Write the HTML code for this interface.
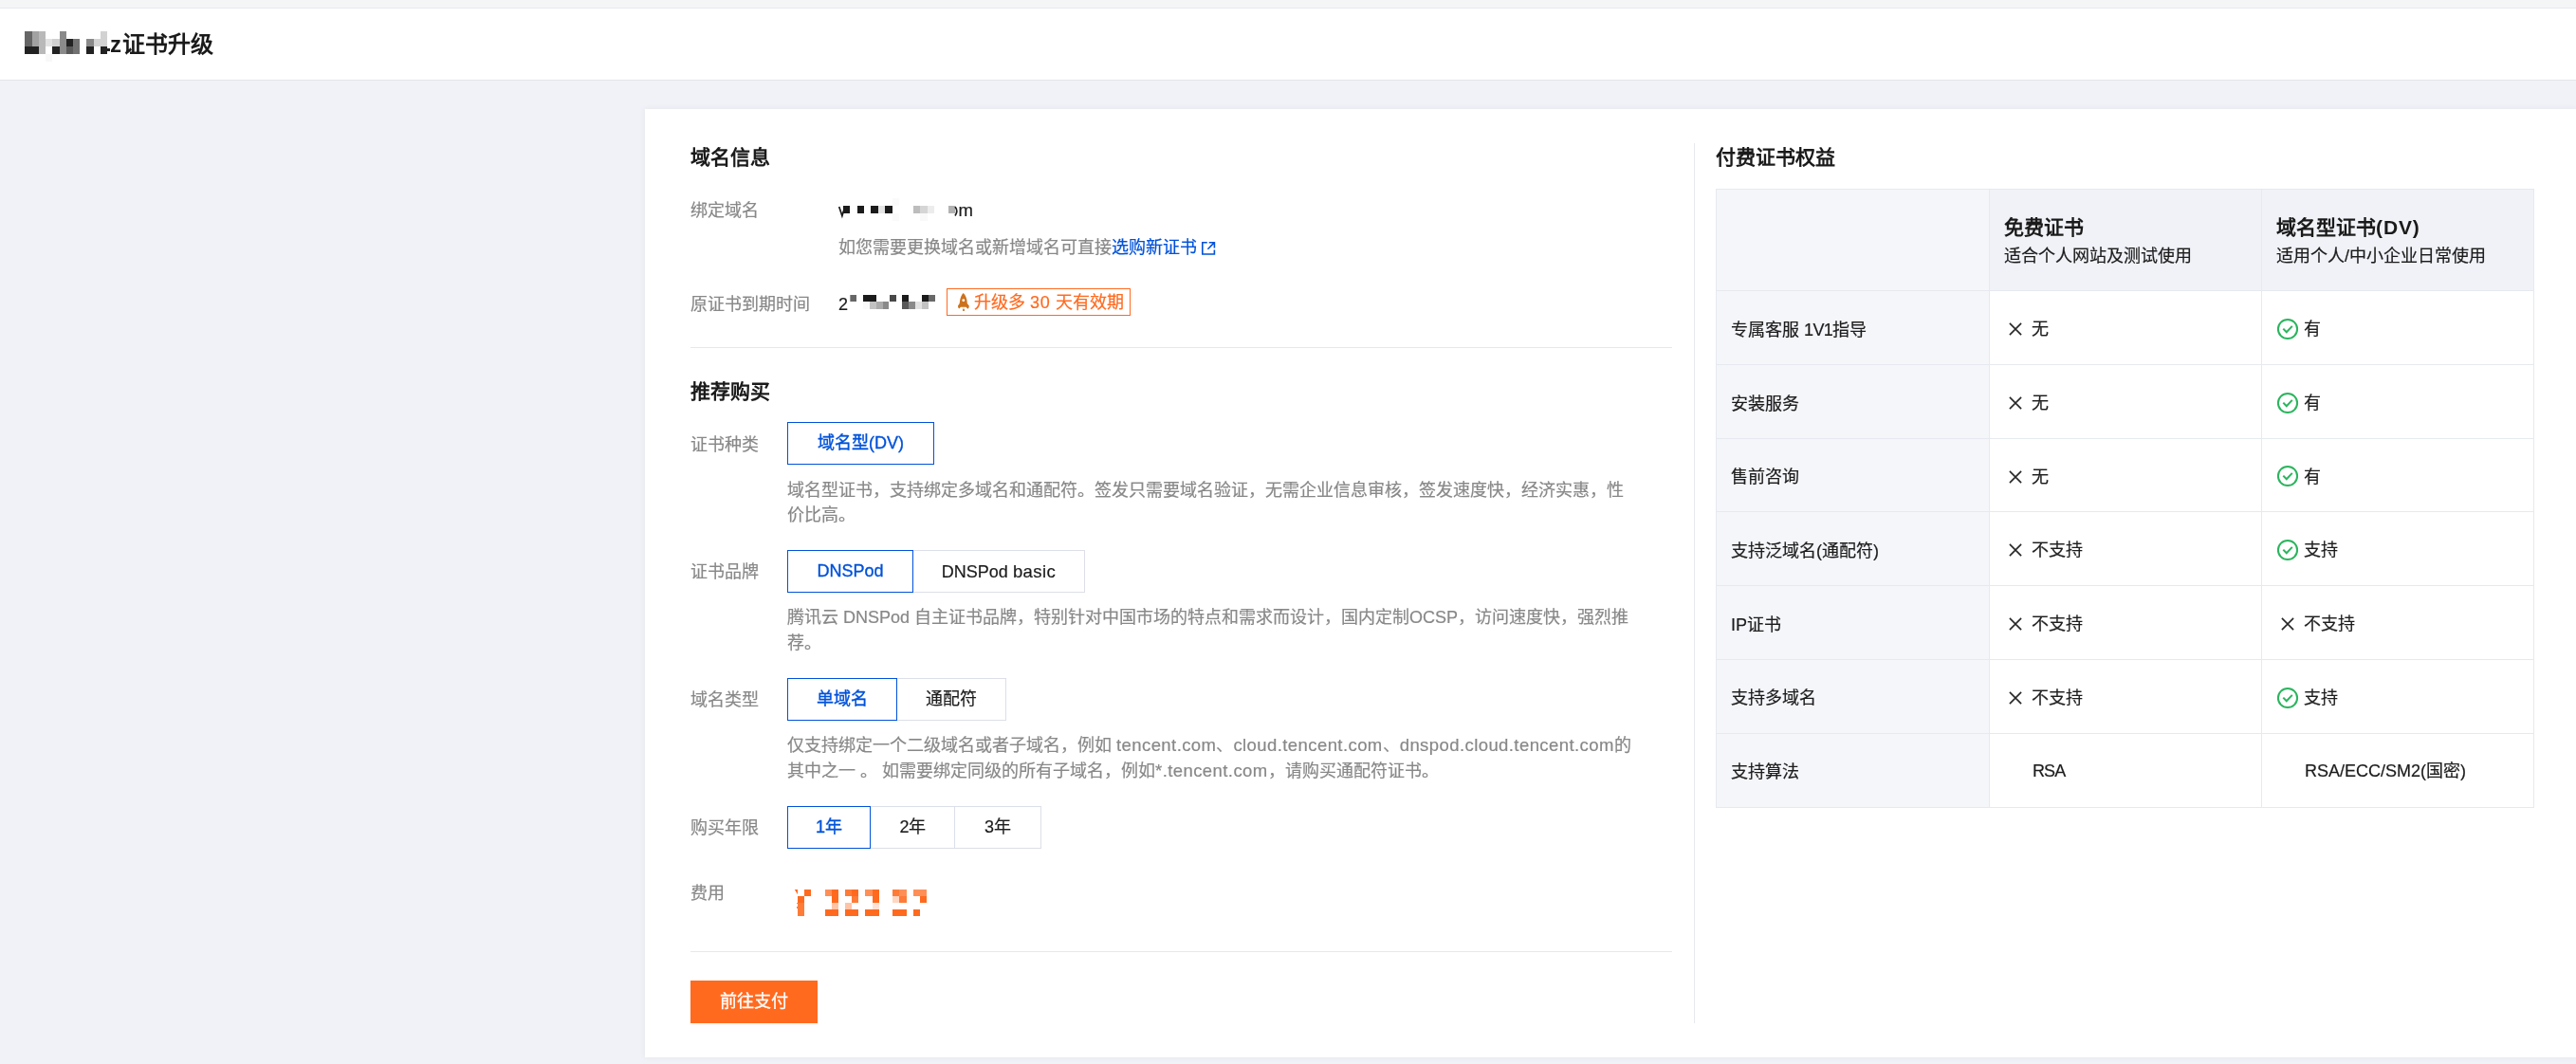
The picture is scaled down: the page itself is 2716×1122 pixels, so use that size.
<!DOCTYPE html>
<html lang="zh-CN">
<head>
<meta charset="utf-8">
<title>证书升级</title>
<style>
html,body{margin:0;padding:0}
body{width:2716px;height:1122px;position:relative;overflow:hidden;background:#f1f2f7;font-family:"Liberation Sans",sans-serif;}
#w>div,.ov,.ic{position:absolute}
.ov{left:0;top:0}
.t{white-space:nowrap;line-height:1;-webkit-text-stroke:.2px}
.b{-webkit-text-stroke:0}
.l{font-size:18.5px;letter-spacing:.42px}
#w{position:absolute;left:0;top:0;width:2716px;height:1122px;will-change:transform}
.seg{box-sizing:content-box;border:1px solid #dcdfe8;background:#fff;color:#1c1c1c;font-size:18px;line-height:43px;text-align:center;white-space:nowrap;-webkit-text-stroke:.2px}
.seg.on{border:1px solid #0052d9;color:#0052d9;-webkit-text-stroke:.35px}
.pay{background:#ff6a1f;color:#fff;font-size:18px;line-height:44px;text-align:center;white-space:nowrap;-webkit-text-stroke:.3px;box-shadow:0 2px 2px rgba(255,106,31,.07)}
</style>
</head>
<body>
<div id="w">
<div style="left:0px;top:0px;width:2716px;height:8px;background:#f4f5f7"></div>
<div style="left:0px;top:8px;width:2716px;height:1px;background:#e5e8ed"></div>
<div style="left:0px;top:9px;width:2716px;height:75px;background:#fff"></div>
<div style="left:0px;top:84px;width:2716px;height:1px;background:#e2e5ea"></div>
<div style="left:680px;top:115px;width:2036px;height:1000px;background:#fff;box-shadow:0 0 6px rgba(40,50,90,.07)"></div>
<div class="t b" style="left:116px;top:34.9px;font-size:24px;color:#1a1a1a;font-weight:700;"><span style="letter-spacing:1.4px">z</span>证书升级</div>
<div class="t b" style="left:728px;top:155.4px;font-size:21px;color:#1a1a1a;font-weight:700;">域名信息</div>
<div class="t" style="left:728px;top:212.9px;font-size:18px;color:#888888;font-weight:400;">绑定域名</div>
<div class="t" style="left:1010.5px;top:212.9px;font-size:18px;color:#1c1c1c;font-weight:400;"><span class="l">m</span></div>
<div class="t" style="left:884px;top:252.1px;font-size:18px;color:#888888;font-weight:400;">如您需要更换域名或新增域名可直接<span style="color:#0052d9">选购新证书</span></div>
<div class="t" style="left:728px;top:312.1px;font-size:18px;color:#888888;font-weight:400;">原证书到期时间</div>
<div class="t" style="left:884px;top:312.1px;font-size:18px;color:#1c1c1c;font-weight:400;">2</div>
<div style="left:998px;top:304px;width:192px;height:27px;border:1px solid #ff6a1f"></div>
<div class="t" style="left:1027px;top:310.0px;font-size:18px;color:#ff6a1f;font-weight:400;">升级多 <span style="letter-spacing:.8px">30</span> 天有效期</div>
<div style="left:728px;top:366px;width:1035px;height:1px;background:#e6e8ee"></div>
<div style="left:728px;top:1003px;width:1035px;height:1px;background:#e6e8ee"></div>
<div style="left:1786px;top:151px;width:1px;height:928px;background:#e6e8ee"></div>
<div class="t b" style="left:728px;top:401.9px;font-size:21px;color:#1a1a1a;font-weight:700;">推荐购买</div>
<div class="t" style="left:728px;top:459.6px;font-size:18px;color:#888888;font-weight:400;">证书种类</div>
<div class="seg on" style="left:830px;top:445px;width:153px;height:43px;">域名型(DV)</div>
<div class="t" style="left:830px;top:508.2px;font-size:18px;color:#888888;font-weight:400;">域名型证书，支持绑定多域名和通配符。签发只需要域名验证，无需企业信息审核，签发速度快，经济实惠，性</div>
<div class="t" style="left:830px;top:534.0px;font-size:18px;color:#888888;font-weight:400;">价比高。</div>
<div class="t" style="left:728px;top:593.6px;font-size:18px;color:#888888;font-weight:400;">证书品牌</div>
<div class="seg" style="left:962px;top:580px;width:180px;height:43px;">DNSPod <span class="l">basic</span></div>
<div class="seg on" style="left:830px;top:580px;width:131px;height:43px;">DNSPod</div>
<div class="t" style="left:830px;top:641.9px;font-size:18px;color:#888888;font-weight:400;">腾讯云 DNSPod 自主证书品牌，特别针对中国市场的特点和需求而设计，国内定制OCSP，访问速度快，强烈推</div>
<div class="t" style="left:830px;top:669.1px;font-size:18px;color:#888888;font-weight:400;">荐。</div>
<div class="t" style="left:728px;top:729.2px;font-size:18px;color:#888888;font-weight:400;">域名类型</div>
<div class="seg" style="left:945px;top:715px;width:114px;height:43px;">通配符</div>
<div class="seg on" style="left:830px;top:715px;width:114px;height:43px;">单域名</div>
<div class="t" style="left:830px;top:777.0px;font-size:18px;color:#888888;font-weight:400;">仅支持绑定一个二级域名或者子域名，例如 <span class="l">tencent.com</span>、<span class="l">cloud.tencent.com</span>、<span class="l">dnspod.cloud.tencent.com</span>的</div>
<div class="t" style="left:830px;top:803.9px;font-size:18px;color:#888888;font-weight:400;">其中之一 。 如需要绑定同级的所有子域名，例如<span class="l">*.tencent.com</span>，请购买通配符证书。</div>
<div class="t" style="left:728px;top:864.1px;font-size:18px;color:#888888;font-weight:400;">购买年限</div>
<div class="seg" style="left:917px;top:850px;width:89px;height:43px;">2年</div>
<div class="seg" style="left:1006px;top:850px;width:90px;height:43px;">3年</div>
<div class="seg on" style="left:830px;top:850px;width:86px;height:43px;">1年</div>
<div class="t" style="left:728px;top:933.3px;font-size:18px;color:#888888;font-weight:400;">费用</div>
<div class="pay" style="left:728px;top:1034px;width:134px;height:45px;">前往支付</div>
<div class="t b" style="left:1809px;top:155.4px;font-size:21px;color:#1a1a1a;font-weight:700;">付费证书权益</div>
<div style="left:1809px;top:199px;width:862px;height:652px;background:#fff"></div>
<div style="left:1809px;top:199px;width:288px;height:652px;background:#f5f6fa"></div>
<div style="left:2097px;top:199px;width:574px;height:107px;background:#f1f2f7"></div>
<div style="left:1809px;top:199px;width:863px;height:1px;background:#e6e9ef"></div>
<div style="left:1809px;top:306px;width:863px;height:1px;background:#e6e9ef"></div>
<div style="left:1809px;top:384px;width:863px;height:1px;background:#e6e9ef"></div>
<div style="left:1809px;top:462px;width:863px;height:1px;background:#e6e9ef"></div>
<div style="left:1809px;top:539px;width:863px;height:1px;background:#e6e9ef"></div>
<div style="left:1809px;top:617px;width:863px;height:1px;background:#e6e9ef"></div>
<div style="left:1809px;top:695px;width:863px;height:1px;background:#e6e9ef"></div>
<div style="left:1809px;top:773px;width:863px;height:1px;background:#e6e9ef"></div>
<div style="left:1809px;top:851px;width:863px;height:1px;background:#e6e9ef"></div>
<div style="left:1809px;top:199px;width:1px;height:653px;background:#e6e9ef"></div>
<div style="left:2097px;top:199px;width:1px;height:653px;background:#e6e9ef"></div>
<div style="left:2384px;top:199px;width:1px;height:653px;background:#e6e9ef"></div>
<div style="left:2671px;top:199px;width:1px;height:653px;background:#e6e9ef"></div>
<div class="t b" style="left:2113px;top:228.5px;font-size:21px;color:#1a1a1a;font-weight:700;">免费证书</div>
<div class="t" style="left:2113px;top:260.6px;font-size:18px;color:#1c1c1c;font-weight:400;">适合个人网站及测试使用</div>
<div class="t b" style="left:2400px;top:228.5px;font-size:21px;color:#1a1a1a;font-weight:700;">域名型证书<span style="letter-spacing:.9px">(DV)</span></div>
<div class="t" style="left:2400px;top:260.6px;font-size:18px;color:#1c1c1c;font-weight:400;">适用个人/中小企业日常使用</div>
<div class="t" style="left:1825px;top:338.6px;font-size:18px;color:#1c1c1c;font-weight:400;">专属客服 <span style="letter-spacing:-.6px">1V1</span>指导</div>
<svg class="ic" style="left:2117.2px;top:339.3px" width="16" height="16" viewBox="0 0 16 16"><path d="M1.9 1.9 L14.1 14.1 M14.1 1.9 L1.9 14.1" stroke="#262626" stroke-width="1.6" fill="none"/></svg>
<div class="t" style="left:2142px;top:338.1px;font-size:18px;color:#1c1c1c;font-weight:400;">无</div>
<svg class="ic" style="left:2400px;top:334.8px" width="24" height="24" viewBox="0 0 24 24"><circle cx="12" cy="12" r="10.1" stroke="#2bb55e" stroke-width="2" fill="none"/><path d="M7.3 11.6 L10.8 15.3 L16.8 8.9" stroke="#2bb55e" stroke-width="2" fill="none"/></svg>
<div class="t" style="left:2429px;top:338.1px;font-size:18px;color:#1c1c1c;font-weight:400;">有</div>
<div class="t" style="left:1825px;top:416.6px;font-size:18px;color:#1c1c1c;font-weight:400;">安装服务</div>
<svg class="ic" style="left:2117.2px;top:417.3px" width="16" height="16" viewBox="0 0 16 16"><path d="M1.9 1.9 L14.1 14.1 M14.1 1.9 L1.9 14.1" stroke="#262626" stroke-width="1.6" fill="none"/></svg>
<div class="t" style="left:2142px;top:416.1px;font-size:18px;color:#1c1c1c;font-weight:400;">无</div>
<svg class="ic" style="left:2400px;top:412.8px" width="24" height="24" viewBox="0 0 24 24"><circle cx="12" cy="12" r="10.1" stroke="#2bb55e" stroke-width="2" fill="none"/><path d="M7.3 11.6 L10.8 15.3 L16.8 8.9" stroke="#2bb55e" stroke-width="2" fill="none"/></svg>
<div class="t" style="left:2429px;top:416.1px;font-size:18px;color:#1c1c1c;font-weight:400;">有</div>
<div class="t" style="left:1825px;top:494.2px;font-size:18px;color:#1c1c1c;font-weight:400;">售前咨询</div>
<svg class="ic" style="left:2117.2px;top:494.90000000000003px" width="16" height="16" viewBox="0 0 16 16"><path d="M1.9 1.9 L14.1 14.1 M14.1 1.9 L1.9 14.1" stroke="#262626" stroke-width="1.6" fill="none"/></svg>
<div class="t" style="left:2142px;top:493.7px;font-size:18px;color:#1c1c1c;font-weight:400;">无</div>
<svg class="ic" style="left:2400px;top:490.40000000000003px" width="24" height="24" viewBox="0 0 24 24"><circle cx="12" cy="12" r="10.1" stroke="#2bb55e" stroke-width="2" fill="none"/><path d="M7.3 11.6 L10.8 15.3 L16.8 8.9" stroke="#2bb55e" stroke-width="2" fill="none"/></svg>
<div class="t" style="left:2429px;top:493.7px;font-size:18px;color:#1c1c1c;font-weight:400;">有</div>
<div class="t" style="left:1825px;top:571.7px;font-size:18px;color:#1c1c1c;font-weight:400;">支持泛域名(通配符)</div>
<svg class="ic" style="left:2117.2px;top:572.4px" width="16" height="16" viewBox="0 0 16 16"><path d="M1.9 1.9 L14.1 14.1 M14.1 1.9 L1.9 14.1" stroke="#262626" stroke-width="1.6" fill="none"/></svg>
<div class="t" style="left:2142px;top:571.2px;font-size:18px;color:#1c1c1c;font-weight:400;">不支持</div>
<svg class="ic" style="left:2400px;top:567.9px" width="24" height="24" viewBox="0 0 24 24"><circle cx="12" cy="12" r="10.1" stroke="#2bb55e" stroke-width="2" fill="none"/><path d="M7.3 11.6 L10.8 15.3 L16.8 8.9" stroke="#2bb55e" stroke-width="2" fill="none"/></svg>
<div class="t" style="left:2429px;top:571.2px;font-size:18px;color:#1c1c1c;font-weight:400;">支持</div>
<div class="t" style="left:1825px;top:649.5px;font-size:18px;color:#1c1c1c;font-weight:400;">IP证书</div>
<svg class="ic" style="left:2117.2px;top:650.1999999999999px" width="16" height="16" viewBox="0 0 16 16"><path d="M1.9 1.9 L14.1 14.1 M14.1 1.9 L1.9 14.1" stroke="#262626" stroke-width="1.6" fill="none"/></svg>
<div class="t" style="left:2142px;top:649.0px;font-size:18px;color:#1c1c1c;font-weight:400;">不支持</div>
<svg class="ic" style="left:2404.2px;top:650.1999999999999px" width="16" height="16" viewBox="0 0 16 16"><path d="M1.9 1.9 L14.1 14.1 M14.1 1.9 L1.9 14.1" stroke="#262626" stroke-width="1.6" fill="none"/></svg>
<div class="t" style="left:2429px;top:649.0px;font-size:18px;color:#1c1c1c;font-weight:400;">不支持</div>
<div class="t" style="left:1825px;top:727.4px;font-size:18px;color:#1c1c1c;font-weight:400;">支持多域名</div>
<svg class="ic" style="left:2117.2px;top:728.1px" width="16" height="16" viewBox="0 0 16 16"><path d="M1.9 1.9 L14.1 14.1 M14.1 1.9 L1.9 14.1" stroke="#262626" stroke-width="1.6" fill="none"/></svg>
<div class="t" style="left:2142px;top:726.9px;font-size:18px;color:#1c1c1c;font-weight:400;">不支持</div>
<svg class="ic" style="left:2400px;top:723.6px" width="24" height="24" viewBox="0 0 24 24"><circle cx="12" cy="12" r="10.1" stroke="#2bb55e" stroke-width="2" fill="none"/><path d="M7.3 11.6 L10.8 15.3 L16.8 8.9" stroke="#2bb55e" stroke-width="2" fill="none"/></svg>
<div class="t" style="left:2429px;top:726.9px;font-size:18px;color:#1c1c1c;font-weight:400;">支持</div>
<div class="t" style="left:1825px;top:805.35px;font-size:18px;color:#1c1c1c;font-weight:400;">支持算法</div>
<div class="t" style="left:2143px;top:804.15px;font-size:18px;color:#1c1c1c;font-weight:400;"><span style="letter-spacing:-.9px">RSA</span></div>
<div class="t" style="left:2430px;top:804.15px;font-size:18px;color:#1c1c1c;font-weight:400;">RSA/ECC/SM2(国密)</div>
<svg class="ov" width="2716" height="1122" viewBox="0 0 2716 1122" shape-rendering="crispEdges"><rect x="26.1" y="33.2" width="7.6" height="8.1" fill="#666"/><rect x="33.7" y="33.2" width="7.4" height="8.1" fill="#a2a2a2"/><rect x="41.1" y="33.2" width="6.7" height="8.1" fill="#b9b9b9"/><rect x="62.8" y="33.2" width="7.0" height="8.1" fill="#8a8a8a"/><rect x="106" y="33.2" width="7.2" height="8.1" fill="#d2d2d2"/><rect x="26.1" y="41.3" width="7.6" height="7.6" fill="#666"/><rect x="33.7" y="41.3" width="7.4" height="7.6" fill="#a2a2a2"/><rect x="41.1" y="41.3" width="6.7" height="7.6" fill="#b9b9b9"/><rect x="47.8" y="41.3" width="7.4" height="7.6" fill="#e2e2e2"/><rect x="55.2" y="41.3" width="7.6" height="7.6" fill="#d0d0d0"/><rect x="62.8" y="41.3" width="7.0" height="7.6" fill="#8a8a8a"/><rect x="69.8" y="41.3" width="6.9" height="7.6" fill="#222"/><rect x="76.7" y="41.3" width="7.2" height="7.6" fill="#727272"/><rect x="91.1" y="41.3" width="7.6" height="7.6" fill="#8a8a8a"/><rect x="98.7" y="41.3" width="7.3" height="7.6" fill="#d4d4d4"/><rect x="106" y="41.3" width="7.2" height="7.6" fill="#d2d2d2"/><rect x="26.1" y="48.9" width="7.6" height="8.2" fill="#222"/><rect x="33.7" y="48.9" width="7.4" height="8.2" fill="#222"/><rect x="41.1" y="48.9" width="6.7" height="8.2" fill="#b9b9b9"/><rect x="55.2" y="48.9" width="7.6" height="8.2" fill="#222"/><rect x="62.8" y="48.9" width="7.0" height="8.2" fill="#8a8a8a"/><rect x="69.8" y="48.9" width="6.9" height="8.2" fill="#595959"/><rect x="76.7" y="48.9" width="7.2" height="8.2" fill="#727272"/><rect x="91.1" y="48.9" width="7.6" height="8.2" fill="#222"/><rect x="106" y="48.9" width="7.2" height="8.2" fill="#222"/><rect x="47.8" y="57.1" width="7.4" height="7.6" fill="#f8f8f8"/><rect x="113.2" y="51.3" width="2.6" height="3" fill="#222"/><rect x="889" y="217.1" width="7" height="7.8" fill="#1b1b1b"/><rect x="903.9" y="217.1" width="7.0" height="7.8" fill="#1b1b1b"/><rect x="918.3" y="217.1" width="7.6" height="7.8" fill="#1b1b1b"/><rect x="925.9" y="217.1" width="7.1" height="7.8" fill="#e4e4e4"/><rect x="933" y="217.1" width="7.8" height="7.8" fill="#1b1b1b"/><rect x="962.9" y="217.1" width="7.1" height="7.8" fill="#bdbdbd"/><rect x="970" y="217.1" width="7.5" height="7.8" fill="#d5d5d5"/><rect x="977.5" y="217.1" width="7.4" height="7.8" fill="#ececec"/><rect x="1000" y="217.1" width="7" height="7.8" fill="#b2b2b2"/><rect x="940.8" y="209" width="7.2" height="8.1" fill="#fafafa"/><rect x="940.8" y="224.9" width="7.2" height="8.5" fill="#fafafa"/><rect x="970" y="224.9" width="7.5" height="8.5" fill="#f9f9f9"/><rect x="897" y="311.1" width="5.7" height="7.0" fill="#666"/><rect x="895.5" y="311.1" width="1.5" height="7.0" fill="#999"/><rect x="909.6" y="311.1" width="13.9" height="7.0" fill="#1b1b1b"/><rect x="909.6" y="318.1" width="7.3" height="7.9" fill="#fafafa"/><rect x="916.9" y="318.1" width="6.6" height="7.9" fill="#c2c2c2"/><rect x="923.5" y="318.1" width="7.2" height="7.9" fill="#ababab"/><rect x="930.7" y="318.1" width="6.6" height="7.9" fill="#8a8a8a"/><rect x="938" y="311.1" width="6.6" height="7.0" fill="#484848"/><rect x="951.2" y="311.1" width="6.6" height="7.0" fill="#1b1b1b"/><rect x="951.2" y="318.1" width="6.6" height="7.9" fill="#585858"/><rect x="957.8" y="318.1" width="7.0" height="7.9" fill="#8a8a8a"/><rect x="964.8" y="318.1" width="7.5" height="7.9" fill="#e2e2e2"/><rect x="972.3" y="311.1" width="6.6" height="7.0" fill="#1b1b1b"/><rect x="972.3" y="318.1" width="6.6" height="7.9" fill="#c2c2c2"/><rect x="978.9" y="311.1" width="7.3" height="7.0" fill="#686868"/><rect x="839.9" y="951.6" width="1.1" height="1.6" fill="#ff7b38"/><rect x="839.9" y="956.2" width="1.1" height="1.8" fill="#ff7b38"/><rect x="848" y="938" width="7" height="6.8" fill="#ff6a1f"/><rect x="841" y="944.8" width="7" height="7.0" fill="#ff6a1f"/><rect x="841" y="951.8" width="7" height="14.1" fill="#ff7b38"/><rect x="869.8" y="938" width="7.2" height="6.8" fill="#ff8f57"/><rect x="877" y="938" width="7" height="13.8" fill="#ff6a1f"/><rect x="877" y="951.8" width="7" height="7.0" fill="#ffc3a6"/><rect x="869.8" y="958.8" width="14.2" height="7.1" fill="#ff6a1f"/><rect x="891" y="938" width="7" height="6.8" fill="#ff7b38"/><rect x="898" y="938" width="7" height="6.8" fill="#ff6a1f"/><rect x="898" y="944.8" width="7" height="7.0" fill="#ff7b38"/><rect x="891" y="951.8" width="7" height="7.0" fill="#ffc3a6"/><rect x="891" y="958.8" width="14" height="7.1" fill="#ff6a1f"/><rect x="912.2" y="938" width="7.8" height="6.8" fill="#ff8f57"/><rect x="920" y="938" width="7" height="13.8" fill="#ff6a1f"/><rect x="920" y="951.8" width="7" height="7.0" fill="#ffe2d5"/><rect x="912.2" y="958.8" width="14.8" height="7.1" fill="#ff6a1f"/><rect x="941" y="938" width="7.2" height="6.8" fill="#ff7b38"/><rect x="948.2" y="938" width="7.4" height="6.8" fill="#ff8f57"/><rect x="941" y="944.8" width="7.2" height="7.0" fill="#ffd6c2"/><rect x="948.2" y="944.8" width="7.4" height="7.0" fill="#ff7b38"/><rect x="941" y="958.8" width="14.6" height="7.1" fill="#ff6a1f"/><rect x="963" y="938" width="14" height="6.8" fill="#ff8f57"/><rect x="970" y="944.8" width="7" height="7.0" fill="#ff6a1f"/><rect x="963" y="958.8" width="7" height="7.1" fill="#ff6a1f"/></svg>
<svg class="ov" width="2716" height="1122" viewBox="0 0 2716 1122"><path d="M884.7 218 L887.9 227.6 L889.6 222" stroke="#1c1c1c" stroke-width="1.7" fill="none"/><path d="M1007 218 Q1010.5 222.5 1007 227.5" stroke="#1c1c1c" stroke-width="1.7" fill="none"/><path d="M837.8 938 L841 938 L841 943.2 Z" fill="#ff6a1f"/><path d="M1272.8 255.7 L1267.8 255.7 L1267.8 268 L1280.4 268 L1280.4 263.4" stroke="#0052d9" stroke-width="1.6" fill="none"/><path d="M1274.7 255.7 L1280.4 255.7 L1280.4 261.5 M1273.4 262.8 L1280.2 255.9" stroke="#0052d9" stroke-width="1.6" fill="none"/><path d="M1015.7 308.9 C1017.7 310.8 1019 313.6 1019.5 317 L1019.8 320 L1021.8 322.5 L1021.5 324.4 L1020.3 325.7 L1018.6 323.8 L1012.9 323.8 L1011.3 325.5 L1010.2 324.3 L1010 322.5 L1011.7 320 L1012.1 317 C1012.6 313.6 1013.8 310.8 1015.7 308.9 Z" fill="#cd721c"/><circle cx="1015.8" cy="316.7" r="1.4" fill="#fff"/><ellipse cx="1016" cy="327" rx="1.15" ry="0.95" fill="#cd721c"/><ellipse cx="1015.8" cy="325.3" rx="1.3" ry="0.7" fill="#cd721c" opacity=".35"/></svg>
</div>
</body>
</html>
